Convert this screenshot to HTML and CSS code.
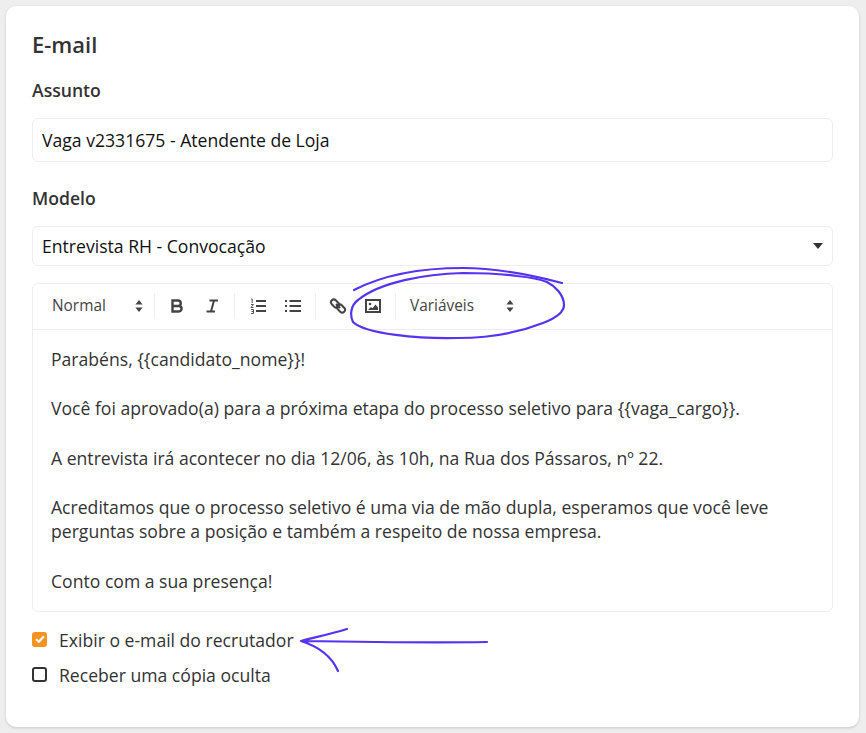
FILE: index.html
```html
<!DOCTYPE html>
<html lang="pt-BR">
<head>
<meta charset="utf-8">
<title>E-mail</title>
<link rel="stylesheet" href="styles.css">
</head>
<body>
<main class="card">
  <h2 class="title">E-mail</h2>
  <label class="label label-first">Assunto</label>
  <div class="field field-input">Vaga v2331675 - Atendente de Loja</div>
  <label class="label label-second">Modelo</label>
  <div class="field field-select">
    <span>Entrevista RH - Convocação</span>
    <svg class="caret" width="10" height="6" viewBox="0 0 10 6"><path d="M0 0h10L5 6z"/></svg>
  </div>
  <section class="editor">
    <div class="toolbar">
      <div class="picker picker-format"><span>Normal</span>
        <svg class="updown" width="8" height="12" viewBox="0 0 8 12"><path d="M4 0l3.600 4.600H.4zM4 12L.4 7.400h7.200z"/></svg>
      </div>
      <i class="sep"></i>
      <div class="group">
        <button class="tool"><svg width="18" height="18" viewBox="0 0 18 18"><path class="st bold" d="M4.500 3.500h5.500a2.700 2.700 0 0 1 0 5.500H4.500zM4.500 9h6.300a2.700 2.700 0 0 1 0 5.500H4.500z"/></svg></button>
        <button class="tool"><svg width="18" height="18" viewBox="0 0 18 18"><path class="st" d="M6.500 3.500h8.500M3.500 14.500h8.500M11 3.500l-3 11"/></svg></button>
      </div>
      <i class="sep"></i>
      <div class="group group-lists">
        <button class="tool"><svg width="18" height="18" viewBox="0 0 18 18"><path class="st" d="M7 4h10M7 9h10M7 14h10"/><path class="st hair" d="M2 2h1.200v4M2 7.500h2.500L2 10.500h2.500M2 12.500h2.500v4H2M2.500 14.500h2"/></svg></button>
        <button class="tool"><svg width="18" height="18" viewBox="0 0 18 18"><path class="st" d="M5.500 4H17M5.500 9H17M5.500 14H17M1 4h2M1 9h2M1 14h2"/></svg></button>
      </div>
      <i class="sep"></i>
      <div class="group">
        <button class="tool"><svg width="18" height="18" viewBox="0 0 18 18"><path class="st" d="M7 7l4 4"/><rect class="st" x="1.500" y="3.700" width="9" height="5.600" rx="2.800" transform="rotate(45 6 6.500)"/><rect class="st" x="7.500" y="8.700" width="9" height="5.600" rx="2.800" transform="rotate(45 12 11.500)"/></svg></button>
        <button class="tool"><svg width="18" height="18" viewBox="0 0 18 18"><rect class="st" x="2" y="3" width="14" height="12"/><circle class="fill" cx="6" cy="7" r="1.300"/><path class="fill" d="M4 13l3-3 1.500 1.200L11.500 7.500 14 10.500V13z"/></svg></button>
      </div>
      <i class="sep"></i>
      <div class="picker picker-vars"><span>Variáveis</span>
        <svg class="updown" width="8" height="12" viewBox="0 0 8 12"><path d="M4 0l3.600 4.600H.4zM4 12L.4 7.400h7.200z"/></svg>
      </div>
    </div>
    <div class="content">
      <p>Parabéns, {{candidato_nome}}!</p>
      <p>&nbsp;</p>
      <p>Você foi aprovado(a) para a próxima etapa do processo seletivo para {{vaga_cargo}}.</p>
      <p>&nbsp;</p>
      <p>A entrevista irá acontecer no dia 12/06, às 10h, na Rua dos Pássaros, nº 22.</p>
      <p>&nbsp;</p>
      <p>Acreditamos que o processo seletivo é uma via de mão dupla, esperamos que você leve perguntas sobre a posição e também a respeito de nossa empresa.</p>
      <p>&nbsp;</p>
      <p>Conto com a sua presença!</p>
    </div>
  </section>
  <div class="check-row check-first">
    <span class="box box-on"><svg width="10" height="8" viewBox="0 0 10 8"><path d="M1 4.200l2.800 2.600L9 1.200" fill="none" stroke="#fff" stroke-width="2.200"/></svg></span>
    <span>Exibir o e-mail do recrutador</span>
  </div>
  <div class="check-row check-second">
    <span class="box"></span>
    <span>Receber uma cópia oculta</span>
  </div>
</main>
<svg class="marks" width="866" height="733" viewBox="0 0 866 733">
  <path d="M354 290C385 274 425 268 463 268C500 268 535 276 562 283"/>
  <path d="M517 276C495 273 480 273 463 273C425 274 380 282 358 300C350 306 350 316 353 322C365 334 420 339 458 338C490 338 520 332 543 323C556 318 564 312 564 305C564 295 555 286 547 282C537 278 527 277 517 276"/>
  <path d="M487 642C430 643 360 642 301 641M347 629C331 634 316 637 301 641C317 646 331 655 338 671"/>
</svg>
</body>
</html>
```
FILE: styles.css
```css
* { box-sizing: border-box; }
html, body { margin: 0; height: 100%; }
body {
  background: #eeeeee;
  padding: 6px 7px 6px 6px;
  font-family: "Open Sans", sans-serif;
  color: #333;
  overflow: hidden;
  position: relative;
}
.card {
  background: #fff;
  border-radius: 10px;
  height: 721px;
  padding: 24px 26px 0;
  box-shadow: 0 1px 3px rgba(0,0,0,.16);
}
.title {
  margin: 0;
  font-size: 22px;
  line-height: 28px;
  font-weight: 600;
  color: #333;
}
.label {
  display: block;
  font-size: 17.600px;
  line-height: 22px;
  font-weight: 600;
  color: #333;
}
.label-first { margin-top: 21px; }
.label-second { margin-top: 25px; }
.field {
  border: 1px solid #eeeeee;
  border-radius: 6px;
  color: #111;
  font-size: 17.600px;
  padding: 0 9px;
  display: flex;
  align-items: center;
}
.field-input { height: 44px; margin-top: 17px; }
.field-select { height: 40px; margin-top: 17px; justify-content: space-between; padding-right: 9px; }
.caret { fill: #333; }
.editor {
  margin-top: 17px;
  border: 1px solid #eeeeee;
  border-radius: 6px;
  height: 329px;
}
.toolbar {
  height: 46px;
  border-bottom: 1px solid #eeeeee;
  display: flex;
  align-items: center;
  padding: 0 0 2px 19px;
}
.picker {
  display: flex;
  align-items: center;
  justify-content: space-between;
  font-size: 15.400px;
  color: #444;
}
.picker .updown { margin-top: 1px; }
.picker-format { width: 91px; margin-right: 11px; }
.picker-vars { width: 104px; margin-left: 14px; }
.updown { fill: #444; }
.sep { width: 1px; height: 26px; background: #eeeeee; }
.group { display: flex; gap: 5px; padding: 0 7px; }
.group-lists { padding-left: 8px; }
.tool {
  width: 30px;
  height: 24px;
  padding: 0;
  border: 0;
  background: none;
  display: flex;
  align-items: center;
  justify-content: center;
}
.st { fill: none; stroke: #444; stroke-width: 2; }
.bold { stroke-width: 2.400; }
.hair { stroke-width: .9; }
.fill { fill: #444; }
.content {
  padding: 17px 18px 0;
  font-size: 17.600px;
  line-height: 1.400;
  color: #333;
}
.content p { margin: 0; }
.check-row {
  display: flex;
  align-items: center;
  gap: 12px;
  font-size: 17.600px;
  line-height: 22px;
  color: #333;
}
.check-first { margin-top: 17px; }
.check-second { margin-top: 13px; }
.box {
  width: 15px;
  height: 15px;
  margin-bottom: 2px;
  border: 2px solid #333;
  border-radius: 3px;
  display: flex;
  align-items: center;
  justify-content: center;
  flex: none;
}
.box-on { background: #f7931e; border-color: #f7931e; }
.marks {
  position: absolute;
  left: 0;
  top: 0;
  pointer-events: none;
}
.marks path { fill: none; stroke: #5533f0; stroke-width: 2.200; stroke-linecap: round; stroke-linejoin: round; }
```
